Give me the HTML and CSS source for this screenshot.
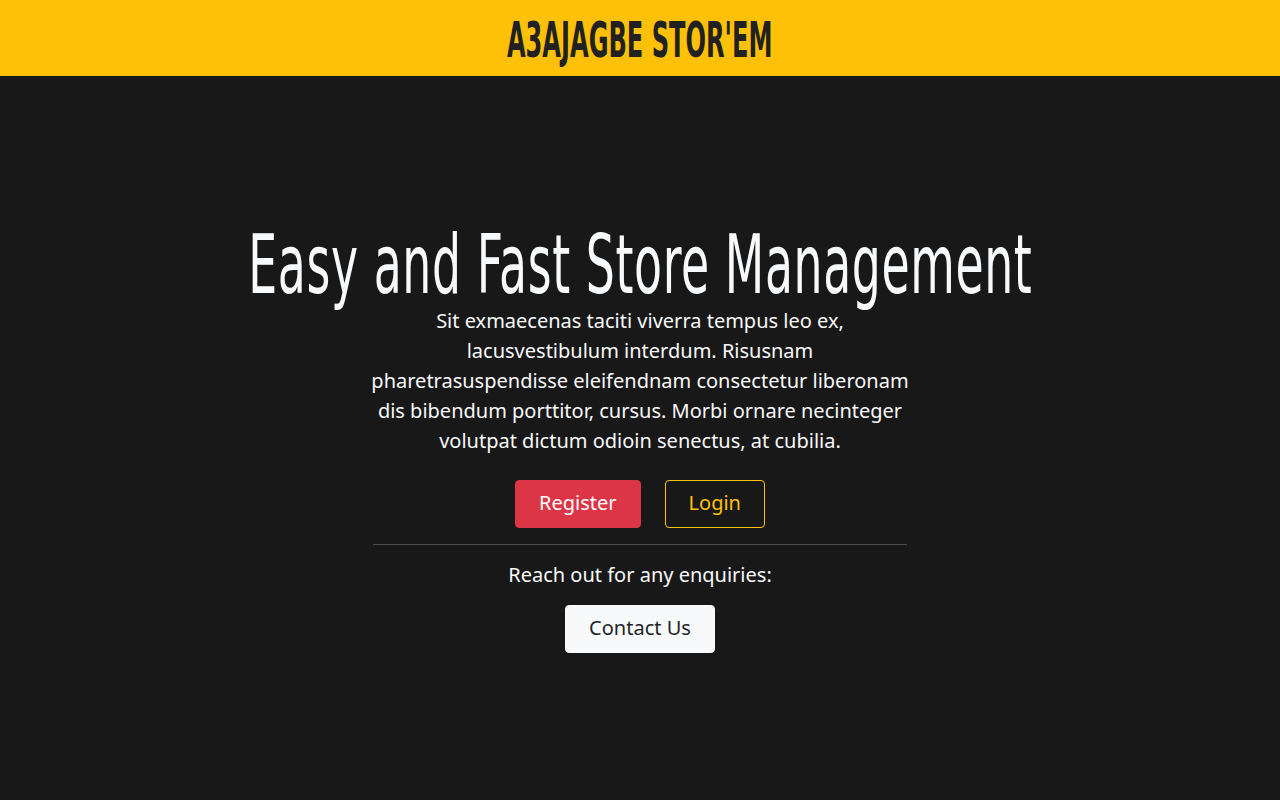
FILE: index.html
```html
<!DOCTYPE html>
<html lang="en">
<head>
<meta charset="utf-8">
<title>A3AJAGBE STOR'EM</title>
<link rel="stylesheet" href="styles.css">
</head>
<body>
<header class="topbar">
  <h1 class="brand"><span class="squeeze">A3AJAGBE STOR'EM</span></h1>
</header>
<main class="hero">
  <div class="hero-inner">
    <h2 class="hero-title"><span class="squeeze">Easy and Fast Store Management</span></h2>
    <p class="lead">Sit exmaecenas taciti viverra tempus leo ex, lacusvestibulum interdum. Risusnam pharetrasuspendisse eleifendnam consectetur liberonam dis bibendum porttitor, cursus. Morbi ornare necinteger volutpat dictum odioin senectus, at cubilia.</p>
    <div class="actions">
      <a class="btn btn-danger" href="#">Register</a>
      <a class="btn btn-outline" href="#">Login</a>
    </div>
    <hr class="divider">
    <p class="enquiry">Reach out for any enquiries:</p>
    <a class="btn btn-light" href="#">Contact Us</a>
  </div>
</main>
</body>
</html>
```

FILE: styles.css
```css
* { box-sizing: border-box; }
html, body { margin: 0; padding: 0; }
body {
  background: #181818;
  color: #f8f9fa;
  font-family: "Noto Sans", "DejaVu Sans", sans-serif;
  min-height: 100vh;
}
.topbar {
  background: #ffc107;
  height: 76px;
  display: flex;
  align-items: center;
  justify-content: center;
}
.brand {
  margin: 0;
  font-family: "DejaVu Sans Condensed", "DejaVu Sans", sans-serif;
  font-stretch: condensed;
  font-weight: 700;
  font-size: 50px;
  line-height: 1;
  color: #212121;
  padding-top: 4px;
}
.brand .squeeze { transform: scaleX(0.536); }
.squeeze {
  display: inline-block;
  white-space: nowrap;
}
.hero {
  min-height: calc(100vh - 76px);
  display: flex;
  align-items: center;
  justify-content: center;
}
.hero-inner {
  display: flex;
  flex-direction: column;
  align-items: center;
  text-align: center;
}
.hero-title {
  margin: 0;
  font-family: "DejaVu Sans Condensed", "DejaVu Sans", sans-serif;
  font-stretch: condensed;
  font-weight: 400;
  font-size: 82px;
  line-height: 1;
  color: #f8f9fa;
  letter-spacing: 1px;
}
.hero-title .squeeze { transform: scaleX(0.62); }
.lead {
  width: 540px;
  margin: 0;
  font-size: 20px;
  line-height: 30px;
}
.actions {
  display: flex;
  gap: 24px;
  margin-top: 24px;
}
.btn {
  display: inline-flex;
  align-items: center;
  justify-content: center;
  height: 48px;
  padding: 0 23px 3px;
  font-size: 20px;
  border-radius: 4px;
  text-decoration: none;
  border: 1px solid transparent;
}
.btn-danger { background: #dc3545; color: #fff; border-color: #dc3545; }
.btn-outline { color: #ffc107; border-color: #ffc107; background: transparent; }
.btn-light { background: #f8f9fa; color: #212529; border-color: #f8f9fa; }
.divider {
  width: 534px;
  margin: 16px 0 15px;
  border: 0;
  border-top: 1px solid #4d4d4d;
}
.enquiry {
  margin: 0 0 15px;
  font-size: 20px;
  line-height: 30px;
}
```
